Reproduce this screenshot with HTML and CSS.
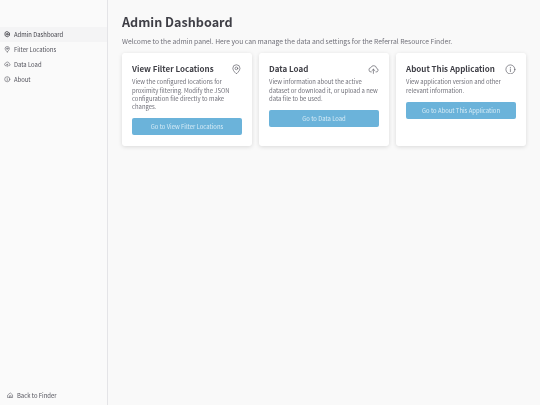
FILE: index.html
```html
<!DOCTYPE html>
<html lang="en">
<head>
<meta charset="utf-8">
<title>Admin Dashboard</title>
<link rel="stylesheet" href="styles.css">
</head>
<body>
<div class="app">
  <aside class="sidebar">
    <nav class="nav">
      <a class="nav-item active"><svg class="nav-icon gear" viewBox="0 0 24 24"><path d="M12 2.500l8.200 4.750v9.500L12 21.500l-8.200-4.750v-9.500z"/><circle cx="12" cy="12" r="3.200"/></svg>Admin Dashboard</a>
      <a class="nav-item"><svg class="nav-icon" viewBox="0 0 24 24"><path d="M12 22s8-6.600 8-12.300a8 8 0 0 0-16 0C4 15.400 12 22 12 22z"/><circle cx="12" cy="9.700" r="3"/></svg>Filter Locations</a>
      <a class="nav-item"><svg class="nav-icon" viewBox="0 0 24 24"><path d="M7 18a5 5 0 0 1-.6-9.950A6.500 6.500 0 0 1 19 9.500a4.300 4.300 0 0 1-1 8.500"/><path d="M12 21v-9M8.500 15l3.500-3.500 3.500 3.500"/></svg>Data Load</a>
      <a class="nav-item"><svg class="nav-icon" viewBox="0 0 24 24"><circle cx="12" cy="12" r="9.500"/><path d="M12 11v6M12 7.500v.5"/></svg>About</a>
    </nav>
    <a class="nav-item back"><svg class="nav-icon" viewBox="0 0 24 24"><path d="M3.500 10.500L12 3.500l8.500 7V21h-17z"/><path d="M9 21v-7h6v7"/></svg>Back to Finder</a>
  </aside>
  <main class="main">
    <h1 class="title">Admin Dashboard</h1>
    <p class="intro">Welcome to the admin panel. Here you can manage the data and settings for the Referral Resource Finder.</p>
    <div class="cards">
      <section class="card">
        <header class="card-head"><h2 class="card-title">View Filter Locations</h2><svg class="card-icon" viewBox="0 0 24 24"><path d="M12 22s8-6.600 8-12.300a8 8 0 0 0-16 0C4 15.400 12 22 12 22z"/><circle cx="12" cy="9.700" r="3"/></svg></header>
        <p class="card-text">View the configured locations for proximity filtering. Modify the JSON configuration file directly to make changes.</p>
        <a class="btn">Go to View Filter Locations</a>
      </section>
      <section class="card">
        <header class="card-head"><h2 class="card-title">Data Load</h2><svg class="card-icon" viewBox="0 0 24 24"><path d="M7 18a5 5 0 0 1-.6-9.950A6.500 6.500 0 0 1 19 9.500a4.300 4.300 0 0 1-1 8.500"/><path d="M12 21v-9M8.500 15l3.500-3.500 3.500 3.500"/></svg></header>
        <p class="card-text">View information about the active dataset or download it, or upload a new data file to be used.</p>
        <a class="btn">Go to Data Load</a>
      </section>
      <section class="card">
        <header class="card-head"><h2 class="card-title">About This Application</h2><svg class="card-icon" viewBox="0 0 24 24"><circle cx="12" cy="12" r="10"/><path d="M12 11v6M12 7.500v.5"/></svg></header>
        <p class="card-text">View application version and other relevant information.</p>
        <a class="btn">Go to About This Application</a>
      </section>
    </div>
  </main>
</div>
</body>
</html>
```

FILE: styles.css
```css
* { box-sizing: border-box; }
html, body { margin: 0; height: 100%; }
body {
  font-family: "Noto Sans CJK SC", "Noto Sans", sans-serif;
  background: #f9f9f9;
  color: #3f3f46;
}
.app { display: flex; height: 405px; will-change: transform; }
.sidebar {
  width: 108px;
  flex: none;
  display: flex;
  flex-direction: column;
  justify-content: space-between;
  padding: 27px 0 0;
  background: #fafafa;
  border-right: 1px solid #e4e4e7;
}
.nav { display: flex; flex-direction: column; }
.nav-item {
  display: flex;
  align-items: center;
  gap: 3.500px;
  height: 15px;
  padding-left: 4px;
  font-size: 5.900px;
  line-height: 15px;
  color: #52525b;
}
.nav-item.active { background: #f4f4f5; color: #3f3f46; }
.nav-icon {
  width: 6.500px;
  height: 6.500px;
  flex: none;
  fill: none;
  stroke: #52525b;
  stroke-width: 2;
  stroke-linecap: round;
  stroke-linejoin: round;
}
.nav-icon.gear { stroke: #3f3f46; stroke-width: 3; }
.back { height: 20px; padding-left: 7px; }
.main { flex: 1; padding: 11px 14px 0; min-width: 0; }
.title {
  margin: 0;
  font-size: 12.600px;
  line-height: 22px;
  font-weight: 700;
  color: #3f3f46;
}
.intro {
  margin: 2px 0 6px;
  font-size: 6.750px;
  line-height: 12px;
  color: #71717a;
  white-space: nowrap;
}
.cards { display: grid; grid-template-columns: repeat(3, 130px); gap: 7px; }
.card {
  height: 93px;
  padding: 10px;
  background: #fff;
  border-radius: 3px;
  box-shadow: 0 1px 4px rgba(0, 0, 0, 0.13);
}
.card-head { display: flex; justify-content: space-between; align-items: center; margin-bottom: 3.400px; }
.card-title { margin: 0; font-size: 8px; line-height: 12px; font-weight: 700; color: #3f3f46; white-space: nowrap; }
.card-icon {
  width: 10.800px;
  height: 10.800px;
  flex: none;
  fill: none;
  stroke: #52525b;
  stroke-width: 1.400;
  stroke-linecap: round;
  stroke-linejoin: round;
}
.card-text { margin: 0 0 6.600px; font-size: 5.900px; line-height: 8.330px; color: #71717a; }
.btn {
  display: block;
  height: 17px;
  line-height: 17px;
  text-align: center;
  font-size: 5.900px;
  color: #d6ebf6;
  background: #6bb3da;
  border-radius: 2px;
}
```
